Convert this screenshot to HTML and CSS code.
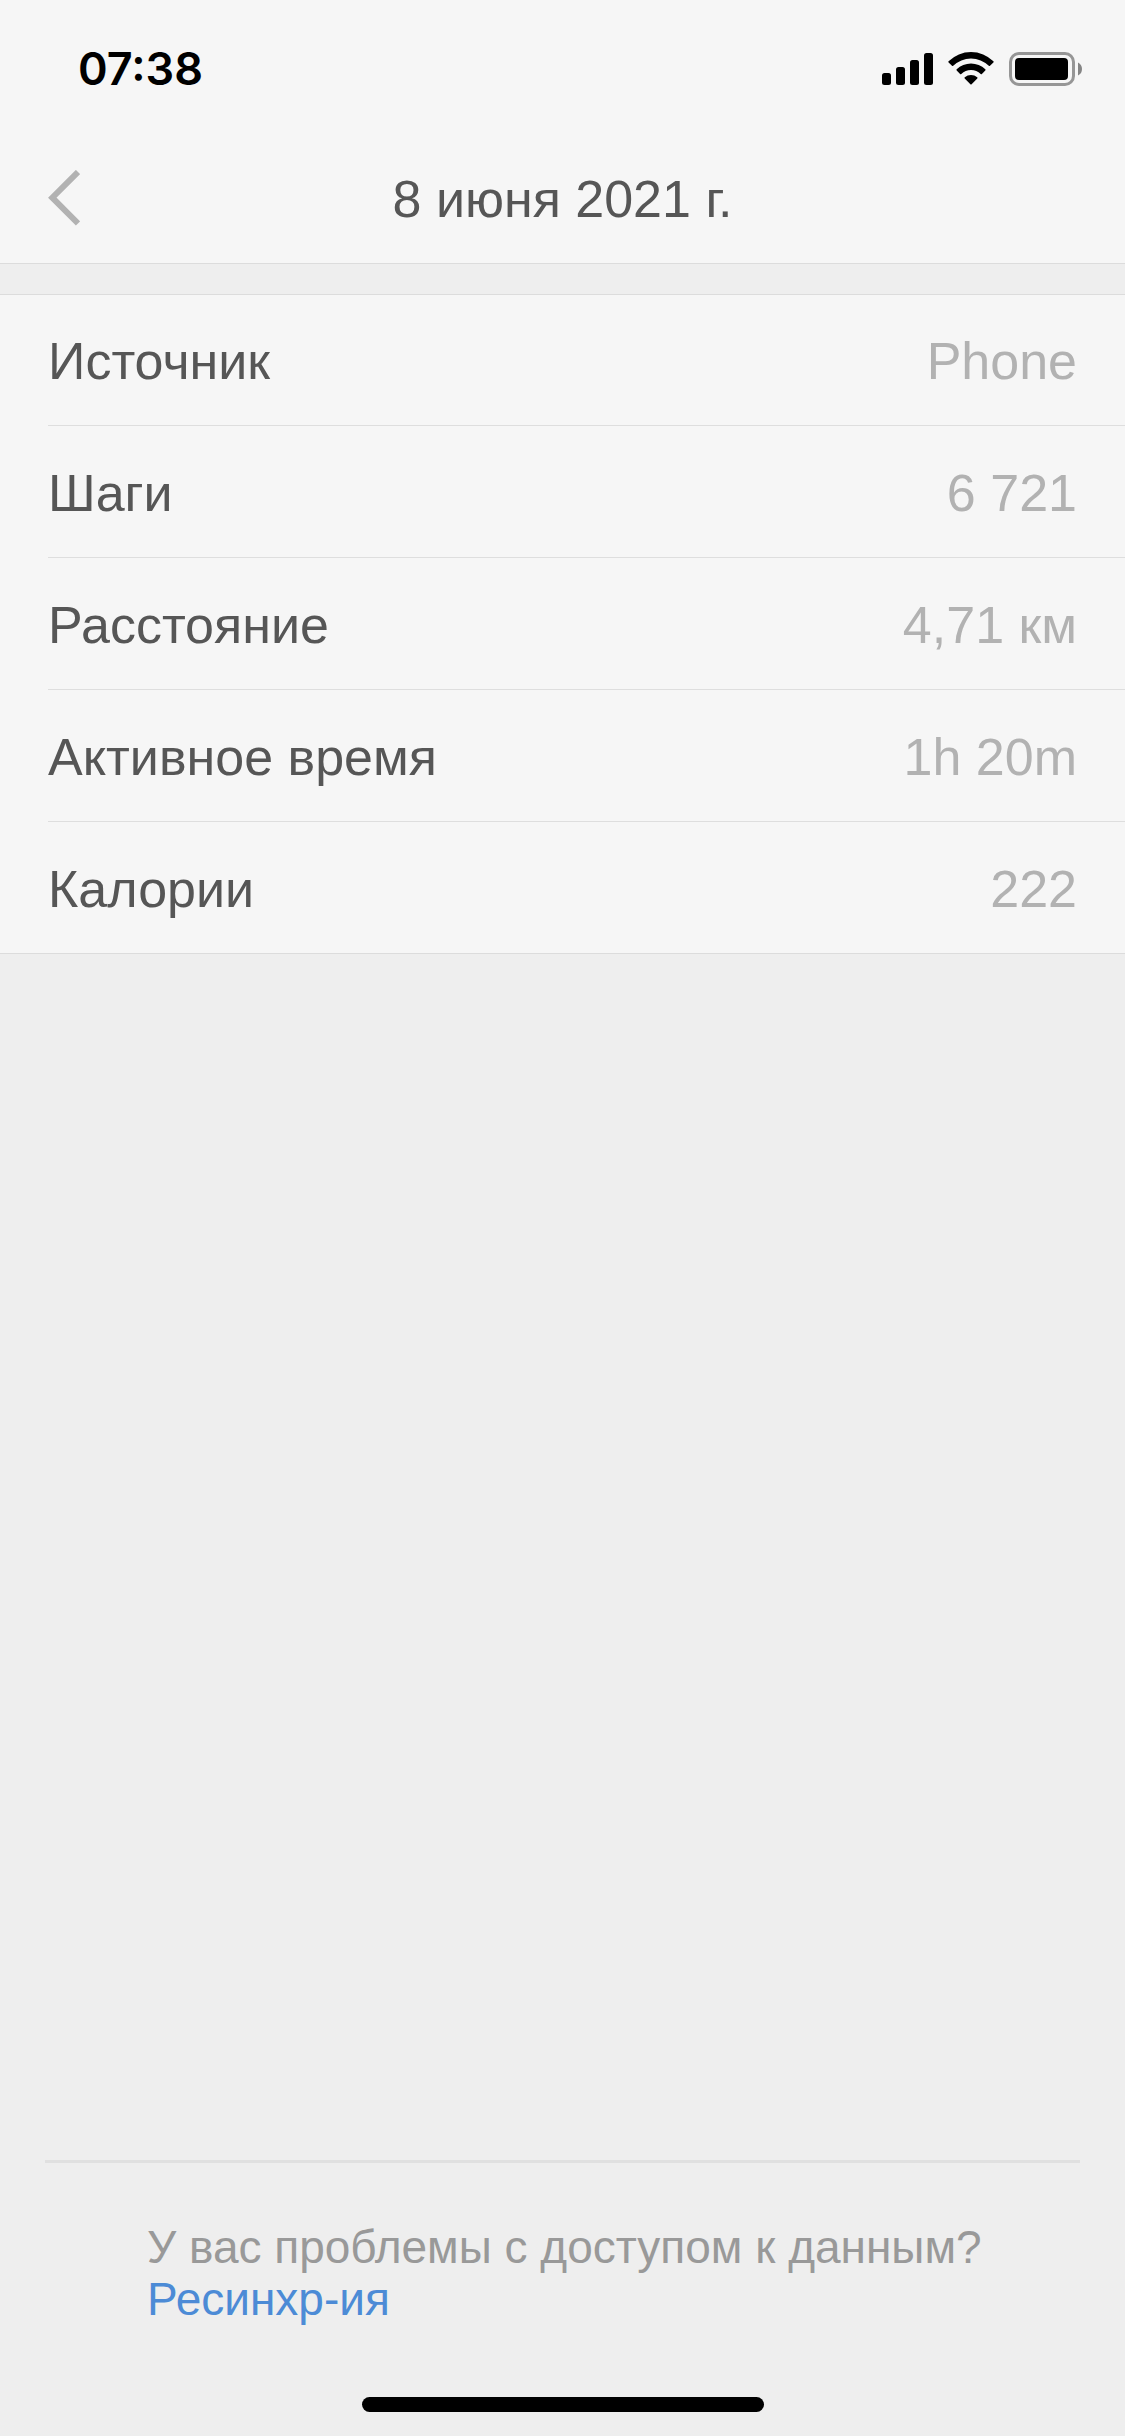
FILE: index.html
```html
<!DOCTYPE html>
<html lang="ru">
<head>
<meta charset="utf-8">
<meta name="viewport" content="width=device-width, initial-scale=1">
<title>8 июня 2021 г.</title>
<link rel="stylesheet" href="styles.css">
</head>
<body>
<div class="status-bar">
  <time class="clock">07:38</time>
  <div class="indicators">
    <svg class="signal" width="51" height="34" viewBox="0 0 51 34" aria-hidden="true">
      <rect x="0" y="21" width="9" height="12" rx="2.5"/>
      <rect x="14" y="15" width="9" height="18" rx="2.5"/>
      <rect x="28" y="8" width="9" height="25" rx="2.5"/>
      <rect x="42" y="1" width="9" height="32" rx="2.5"/>
    </svg>
    <svg class="wifi" width="46" height="34" viewBox="0 0 46 34" aria-hidden="true">
      <path d="M0.6 9.2a32 32 0 0 1 44.8 0q.6.6 0 1.200l-3.400 3.400q-.6.6-1.200 0a25.500 25.500 0 0 0-35.600 0q-.6.6-1.200 0l-3.400-3.400q-.6-.6 0-1.200z"/>
      <path d="M8.700 17.300a20.500 20.500 0 0 1 28.600 0q.6.6 0 1.200l-3.400 3.400q-.6.6-1.200 0a14 14 0 0 0-19.400 0q-.6.6-1.200 0l-3.400-3.400q-.6-.6 0-1.200z"/>
      <path d="M16.800 25.200a9.500 9.500 0 0 1 12.400 0q.7.600.1 1.200l-5.700 5.900q-.6.600-1.200 0l-5.700-5.900q-.6-.6.1-1.200z"/>
    </svg>
    <svg class="battery" width="73" height="34" viewBox="0 0 73 34" aria-hidden="true">
      <rect class="battery-case" x="1.500" y="1.500" width="63" height="31" rx="8.500"/>
      <rect x="6" y="6" width="53" height="22" rx="4"/>
      <path class="battery-tip" d="M69 10.500q4 2 4 6.500t-4 6.500z"/>
    </svg>
  </div>
</div>
<header class="nav-bar">
  <button class="back" type="button" aria-label="Назад">
    <svg width="32" height="56" viewBox="0 0 32 56" aria-hidden="true"><path d="M30 2 4.300 27.700 30 53.400"/></svg>
  </button>
  <h1 class="title">8 июня 2021 г.</h1>
</header>
<main class="content">
  <dl class="details">
    <div class="row"><dt>Источник</dt><dd>Phone</dd></div>
    <div class="row"><dt>Шаги</dt><dd>6 721</dd></div>
    <div class="row"><dt>Расстояние</dt><dd>4,71 км</dd></div>
    <div class="row"><dt>Активное время</dt><dd>1h 20m</dd></div>
    <div class="row"><dt>Калории</dt><dd>222</dd></div>
  </dl>
</main>
<footer class="help">
  <p class="help-text">У вас проблемы с доступом к данным?<br><a class="help-link" href="#resync">Ресинхр-ия</a></p>
</footer>
<div class="home-indicator"></div>
</body>
</html>
```
FILE: styles.css
```css
* {
  box-sizing: border-box;
}

body {
  display: flex;
  flex-direction: column;
  min-height: 100vh;
  margin: 0;
  background: #eeeeee;
  color: #565656;
  font-family: "Liberation Sans", Arial, sans-serif;
  font-size: 52px;
  line-height: 60px;
}

.status-bar {
  display: flex;
  align-items: center;
  justify-content: space-between;
  min-height: 132px;
  padding: 6px 43px 0 78px;
  background: #f6f6f6;
  color: #000000;
}

.clock {
  font-family: Inter, sans-serif;
  font-size: 45px;
  font-weight: 600;
}

.indicators {
  display: flex;
  align-items: center;
  gap: 15px;
}

.battery-case {
  fill: none;
  stroke: #969696;
  stroke-width: 3;
}

.battery-tip {
  fill: #858585;
}

.nav-bar {
  display: grid;
  grid-template-columns: 80px 1fr 80px;
  align-items: center;
  min-height: 132px;
  padding: 0 48px;
  border-bottom: 1px solid #dcdcdc;
  background: #f6f6f6;
}

.back {
  justify-self: start;
  padding: 0;
  border: 0;
  background: none;
}

.back svg {
  display: block;
  fill: none;
  stroke: #b2b2b2;
  stroke-width: 6;
}

.title {
  margin: 0;
  padding-top: 2px;
  font-size: 52px;
  font-weight: 400;
  text-align: center;
}

.content {
  flex: 1;
  padding-top: 30px;
}

.details {
  margin: 0;
  padding-left: 48px;
  border: solid #dcdcdc;
  border-width: 1px 0;
  background: #f6f6f6;
}

.row {
  display: flex;
  align-items: center;
  justify-content: space-between;
  min-height: 132px;
  padding: 2px 48px 0 0;
  border-bottom: 1px solid #dedede;
}

.row:first-child {
  min-height: 131px;
}

.row:last-child {
  min-height: 131px;
  border-bottom: 0;
}

.row dd {
  margin: 0;
  color: #b2b2b2;
}

.help {
  margin: 0 45px;
  padding: 58px 48px 0 102px;
  border-top: 3px solid #e0e0e0;
  color: #999999;
  font-size: 46px;
  line-height: 52px;
}

.help-text {
  margin: 0;
}

.help-link {
  color: #4c8bd6;
  text-decoration: none;
}

.home-indicator {
  align-self: center;
  width: 402px;
  height: 15px;
  margin: 72px 0 24px;
  border-radius: 8px;
  background: #000000;
}
```
